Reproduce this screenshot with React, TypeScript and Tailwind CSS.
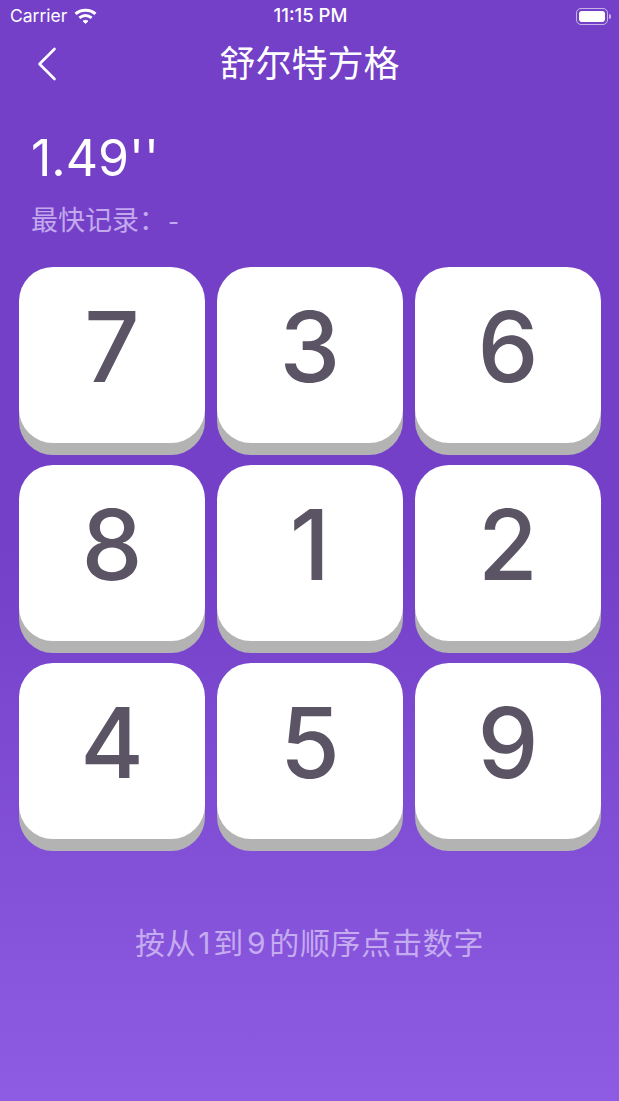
const NUMBERS = [7, 3, 6, 8, 1, 2, 4, 5, 9];

const CJK = "font-['Inter','Noto_Sans_CJK_SC',sans-serif]";

function StatusBar() {
  return (
    <div className="grid h-8 grid-cols-3 items-center pl-[10px] pr-[8px] text-white">
      <div className="flex items-center gap-[7px] font-['Inter',sans-serif] text-[17.5px]">
        <span>Carrier</span>
        <svg width="23" height="17" viewBox="0 0 20 15" fill="none" stroke="white" strokeLinecap="butt">
          <path d="M1.2 5.2 C6 0.8 14 0.8 18.8 5.2" strokeWidth="2.6" />
          <path d="M4.6 8.8 C8 6 12 6 15.4 8.8" strokeWidth="2.6" />
          <path d="M10 13.6 L7.8 11.6 C9 10.6 11 10.6 12.2 11.6 Z" fill="white" strokeWidth="0.8" />
        </svg>
      </div>
      <div className="text-center font-['Inter',sans-serif] text-[18.5px] font-medium">11:15 PM</div>
      <div className="flex items-center justify-end">
        <div className="flex h-[17px] w-[32px] items-center rounded-[5px] border border-white/60 p-[2px]">
          <div className="h-full w-full rounded-[3px] bg-white" />
        </div>
        <div className="ml-[1px] h-[5px] w-[2px] rounded-r-sm bg-white/60" />
      </div>
    </div>
  );
}

export default function App() {
  return (
    <div className="flex h-[1101px] w-[619px] flex-col overflow-hidden bg-gradient-to-b from-[#7440c8] from-50% to-[#8e5ce3] text-white">
      <StatusBar />

      {/* Header */}
      <div className="grid h-[64px] grid-cols-[100px_1fr_100px] items-center">
        <div className="pl-[37px]">
          <svg width="20" height="34" viewBox="0 0 20 34" fill="none" stroke="white" strokeWidth="2.6" strokeLinecap="round" strokeLinejoin="round">
            <path d="M17.5 2 L2.5 17 L17.5 32" />
          </svg>
        </div>
        <h1 className={`text-center text-[36px] font-normal leading-none ${CJK}`}>舒尔特方格</h1>
      </div>

      {/* Time */}
      <div className="pl-[31px] pt-[30px]">
        <div className="font-['Inter',sans-serif] text-[50px] font-normal leading-[64px]">1.49''</div>
        <div className={`mt-[12px] text-[27px] leading-[38px] text-[#c3a8ee] ${CJK}`}>
          最快记录：<span className="ml-[2px] text-[24px]">-</span>
        </div>
      </div>

      {/* Grid */}
      <div className="mt-[26px] grid grid-cols-[repeat(3,186px)] gap-x-[12px] gap-y-[22px] pl-[19px]">
        {NUMBERS.map(n => (
          <div key={n} className="flex h-[176px] items-center justify-center rounded-[34px] bg-white pb-[17px] font-['Inter',sans-serif] text-[97px] font-medium leading-none text-[#5a5464] shadow-[0_12px_0_#b3b3b3]">
            {n}
          </div>
        ))}
      </div>

      <div className={`mt-[84px] text-center text-[30px] leading-[40px] tracking-[0.7px] text-[#c5abf0] ${CJK}`}>
        按从<span className="px-[2px]">1</span>到<span className="px-[3px]">9</span>的顺序点击数字
      </div>
    </div>
  );
}
